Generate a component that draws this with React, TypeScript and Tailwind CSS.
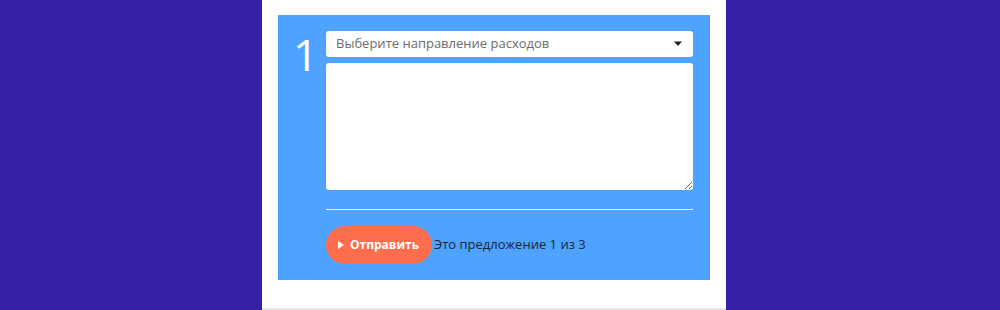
import React from "react";

export default function App() {
    return (
        <div className="w-[1000px] h-[310px] bg-[#3621a6] flex" style={{ fontFamily: "'Open Sans', sans-serif" }}>
            <div className="ml-[262px] w-[464px] h-[310px] bg-white border-b-2 border-[#e5e5e8] px-[16px] pt-[15px]">
                <div className="bg-[#4da3ff] flex pl-[15px] pr-[17px] pt-[16px] pb-[16px]">
                    <div className="w-[33px] text-white text-[44px] font-normal leading-none pt-[1px]">1</div>
                    <div className="flex-1 flex flex-col">
                        <div className="h-[26px] bg-white rounded-[3px] flex items-center justify-between pl-[10px] pr-[10px]">
                            <span className="text-[13px] text-[#6b6b6b]">Выберите направление расходов</span>
                            <svg width="10" height="6" viewBox="0 0 10 6">
                                <path d="M1 0.5 L9 0.5 L5 5 Z" fill="#222" />
                            </svg>
                        </div>
                        <textarea className="mt-[6px] h-[127px] bg-white rounded-[3px] outline-none block w-full" />
                        <div className="mt-[19px] h-px bg-white/90" />
                        <div className="mt-[16px] flex items-center">
                            <button className="h-[38px] w-[106px] rounded-full bg-[#ff6d4f] text-white text-[12px] font-bold flex items-center pl-[12px] gap-[6px]">
                                <svg width="6" height="8" viewBox="0 0 6 8">
                                    <path d="M0 0 L6 4 L0 8 Z" fill="white" />
                                </svg>
                                Отправить
                            </button>
                            <span className="ml-[2px] text-[13px] text-[#1d2333]">Это предложение 1 из 3</span>
                        </div>
                    </div>
                </div>
            </div>
        </div>
    );
}
